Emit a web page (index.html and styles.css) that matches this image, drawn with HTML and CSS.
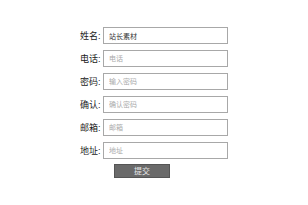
FILE: index.html
```html
<!DOCTYPE html>
<html lang="zh">
<head>
    <meta charset="UTF-8">
    <title>注册</title>
    <link rel="stylesheet" href="styles.css">
</head>
<body>
    <form class="reg-form">
        <div class="row">
            <label>姓名:</label>
            <input type="text" value="站长素材">
        </div>
        <div class="row">
            <label>电话:</label>
            <input type="text" placeholder="电话">
        </div>
        <div class="row">
            <label>密码:</label>
            <input type="password" placeholder="输入密码">
        </div>
        <div class="row">
            <label>确认:</label>
            <input type="password" placeholder="确认密码">
        </div>
        <div class="row">
            <label>邮箱:</label>
            <input type="text" placeholder="邮箱">
        </div>
        <div class="row">
            <label>地址:</label>
            <input type="text" placeholder="地址">
        </div>
        <div class="actions">
            <button type="button">提交</button>
        </div>
    </form>
</body>
</html>
```

FILE: styles.css
```css
body {
    margin: 0;
    background: #fff;
    font-family: "Liberation Sans", "Noto Sans CJK SC", sans-serif;
    color: #333;
}

.reg-form {
    width: 148px;
    margin: 0 auto;
    padding-top: 27px;
    display: flex;
    flex-direction: column;
    gap: 6px;
}

.row {
    display: flex;
    align-items: center;
    height: 17px;
}

.row label {
    width: 23px;
    font-size: 9px;
    color: #1a1a1a;
    white-space: nowrap;
}

.row input {
    width: 125px;
    height: 17px;
    box-sizing: border-box;
    border: 1px solid #a8a8a8;
    padding: 0 5px;
    font-family: inherit;
    font-size: 7px;
    color: #333;
    outline: none;
}

.row input::placeholder {
    color: #aaa;
}

.actions {
    padding-left: 34px;
    margin-top: -5px;
}

.actions button {
    width: 56px;
    height: 14px;
    background: #6a6a6a;
    border: 1px solid #555;
    color: #e8e8e8;
    font-family: inherit;
    font-size: 8px;
    padding: 0;
}
```
